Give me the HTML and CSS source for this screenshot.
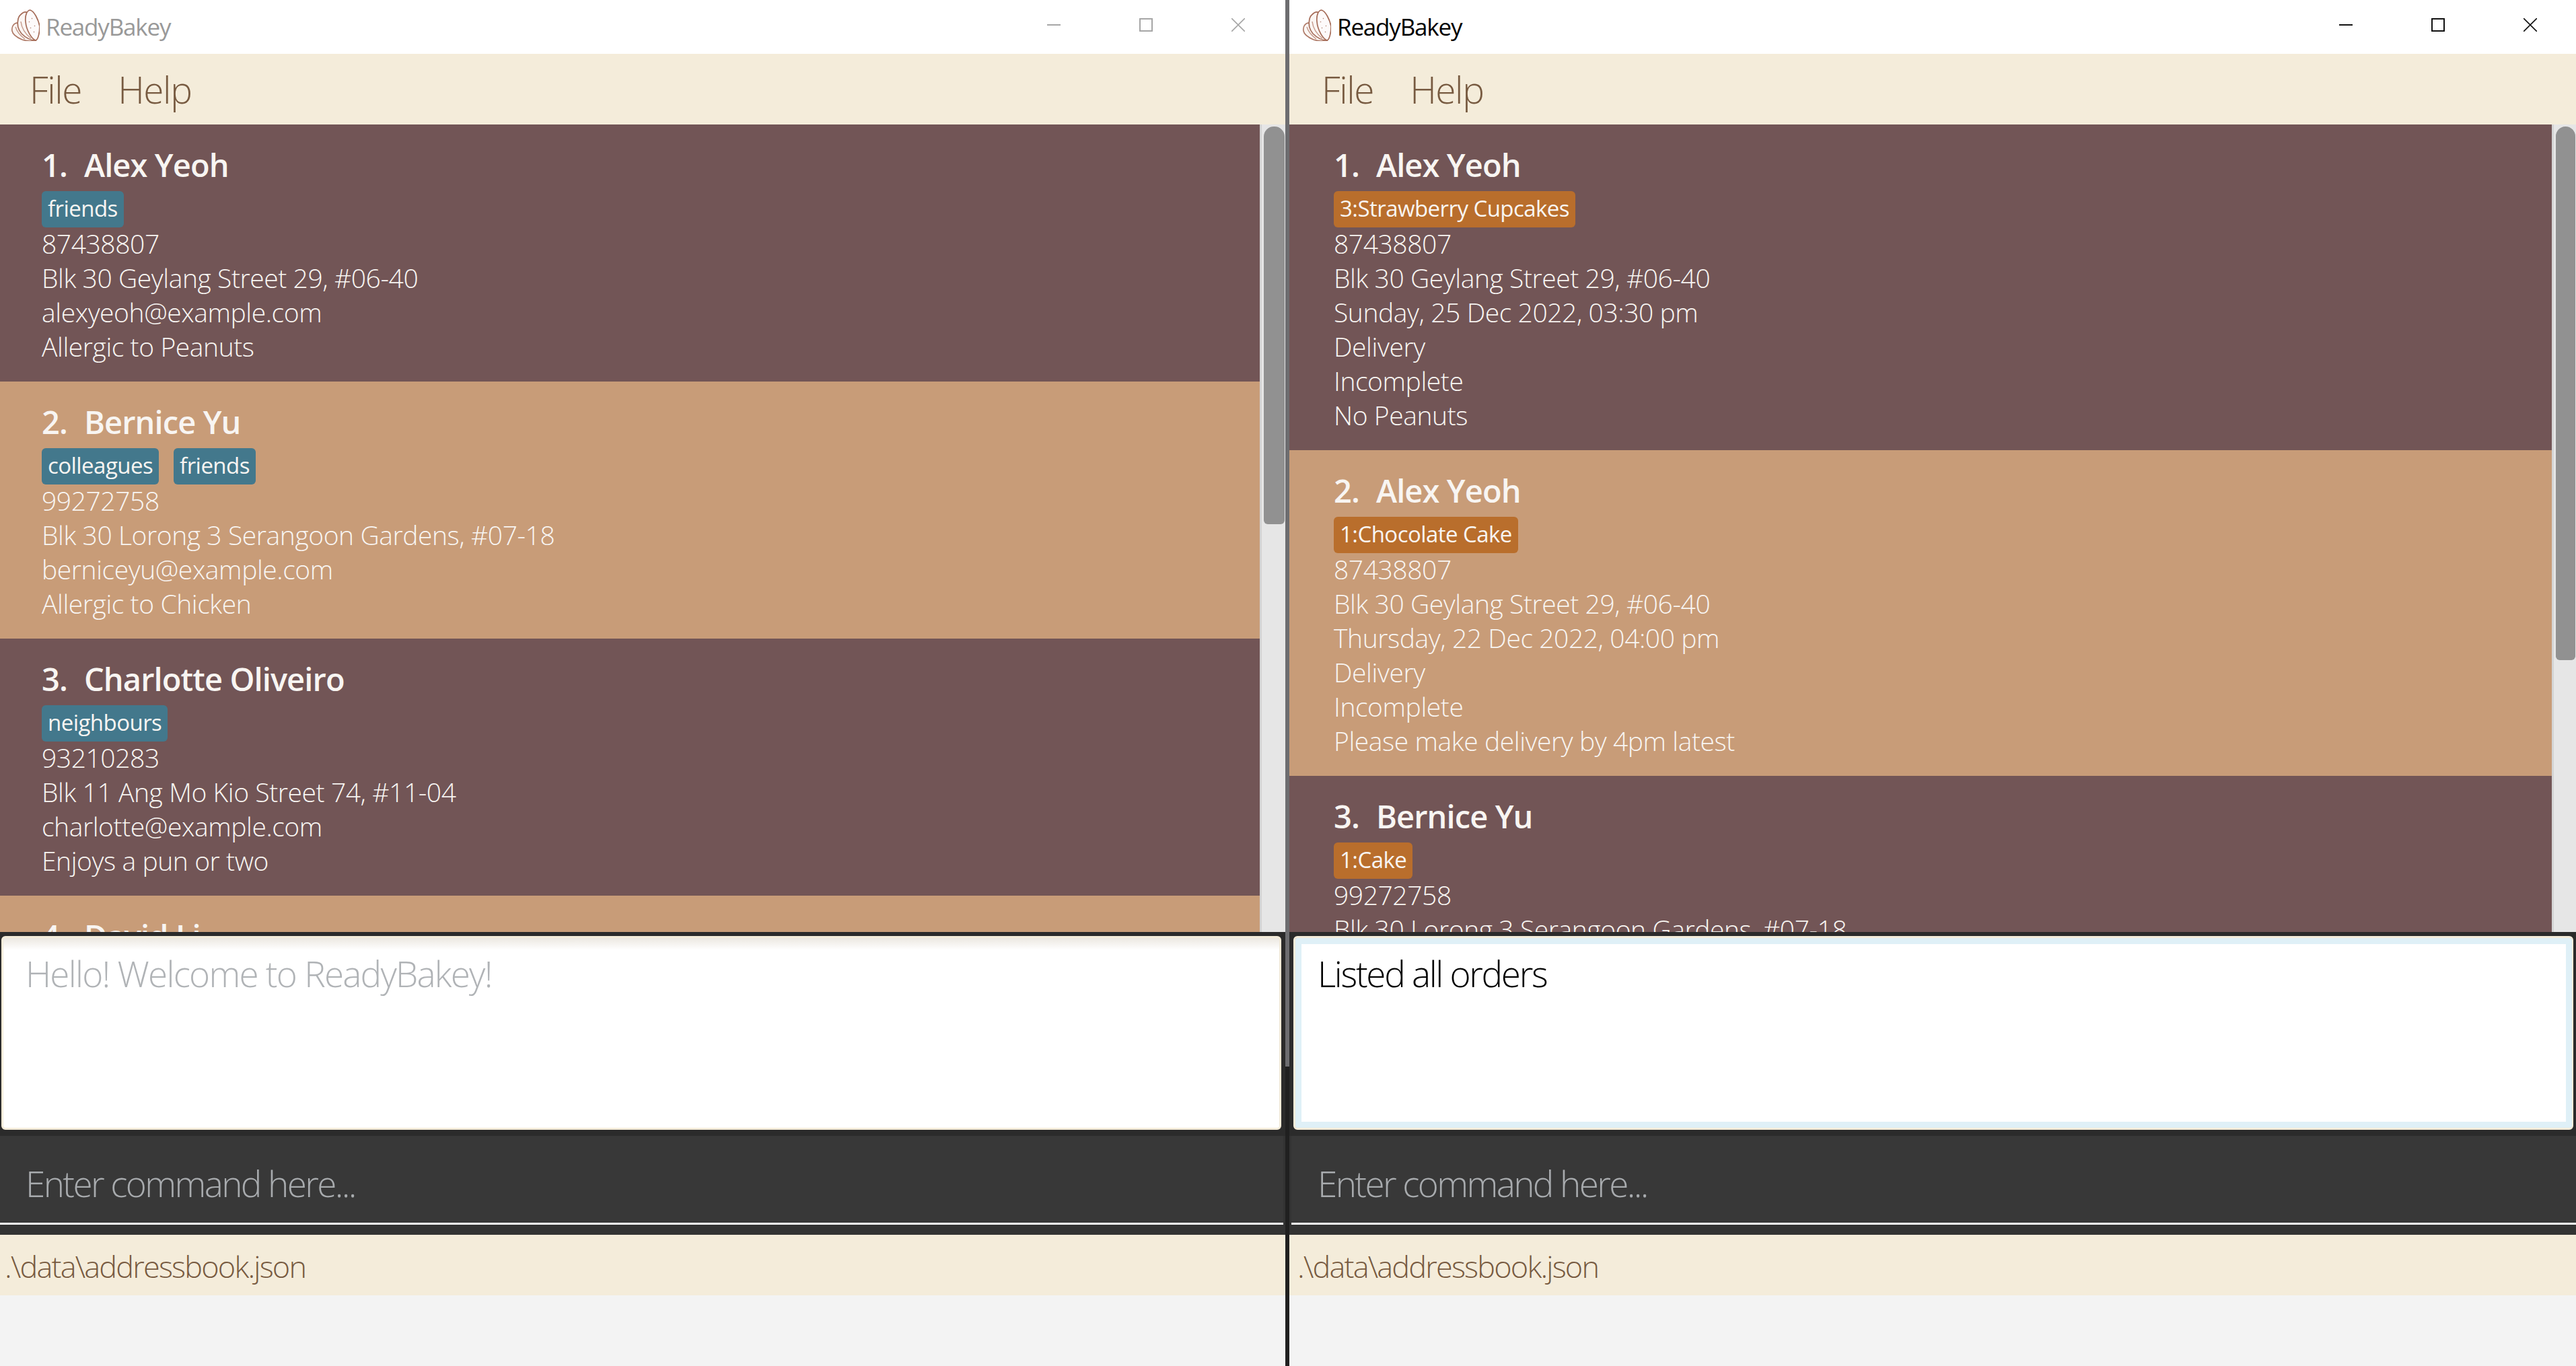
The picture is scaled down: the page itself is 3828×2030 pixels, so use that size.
FILE: index.html
```html
<!DOCTYPE html>
<html lang="en">
<head>
<meta charset="utf-8">
<title>ReadyBakey</title>
<link rel="stylesheet" href="styles.css">
</head>
<body>
<svg class="defs" width="0" height="0" aria-hidden="true">
  <symbol id="logo" viewBox="0 0 42 47">
    <path d="M8 20C3 21 0 26 1 32C2 38 9 42 16 45C22 47 31 47 36 46L22 24Z" fill="#fbf6f3" stroke="#ad7865" stroke-width="1.6"/>
    <path d="M17 5C22 2 26 5 27 12L36 46C29 46 21 42 15 36C10 30 8 22 10 14C11 10 14 7 17 5Z" fill="#fbf6f3" stroke="#a56c58" stroke-width="1.7"/>
    <path d="M28 1C34 3 40 15 42 25C42 33 40 45 36 46C30 44 22 31 21 18C20 9 23 1 28 1Z" fill="#fdfafa" stroke="#a56c58" stroke-width="1.7"/>
    <path d="M14 18C15 27 20 36 29 43M6 26C8 33 12 38 20 44" fill="none" stroke="#c59a8b" stroke-width="1.4"/>
    <path d="M30 13l1 1M34 24l1 1M28 27l1 1M33 33l1 1M26 18l1 1" stroke="#b98d7e" stroke-width="1.4"/>
  </symbol>
</svg>
<main class="desktop">
  <section class="window window-inactive">
    <header class="titlebar">
      <svg class="app-logo"><use href="#logo"/></svg>
      <span class="app-title">ReadyBakey</span>
      <div class="controls">
        <svg class="ctl" viewBox="0 0 20 20"><path d="M0 10H20" stroke-width="2"/></svg>
        <svg class="ctl" viewBox="0 0 20 20"><rect x="1" y="1" width="18" height="18" stroke-width="2"/></svg>
        <svg class="ctl" viewBox="0 0 20 20"><path d="M0 0L20 20M20 0L0 20" stroke-width="1.6"/></svg>
      </div>
    </header>
    <nav class="menubar"><span>File</span><span>Help</span></nav>
    <div class="list-pane">
      <div class="list">
        <article class="card">
          <h2 class="name"><span class="idx">1.</span>Alex Yeoh</h2>
          <div class="tags"><span class="tag">friends</span></div>
          <p>87438807</p>
          <p>Blk 30 Geylang Street 29, #06-40</p>
          <p>alexyeoh@example.com</p>
          <p>Allergic to Peanuts</p>
        </article>
        <article class="card">
          <h2 class="name"><span class="idx">2.</span>Bernice Yu</h2>
          <div class="tags"><span class="tag">colleagues</span><span class="tag">friends</span></div>
          <p>99272758</p>
          <p>Blk 30 Lorong 3 Serangoon Gardens, #07-18</p>
          <p>berniceyu@example.com</p>
          <p>Allergic to Chicken</p>
        </article>
        <article class="card">
          <h2 class="name"><span class="idx">3.</span>Charlotte Oliveiro</h2>
          <div class="tags"><span class="tag">neighbours</span></div>
          <p>93210283</p>
          <p>Blk 11 Ang Mo Kio Street 74, #11-04</p>
          <p>charlotte@example.com</p>
          <p>Enjoys a pun or two</p>
        </article>
        <article class="card">
          <h2 class="name"><span class="idx">4.</span>David Li</h2>
        </article>
      </div>
      <div class="track"><div class="thumb"></div></div>
    </div>
    <div class="result"><p class="result-text">Hello! Welcome to ReadyBakey!</p></div>
    <div class="command"><span>Enter command here...</span></div>
    <footer class="status">.\data\addressbook.json</footer>
    <div class="blank"></div>
  </section>

  <div class="divider"></div>

  <section class="window window-active">
    <header class="titlebar">
      <svg class="app-logo"><use href="#logo"/></svg>
      <span class="app-title">ReadyBakey</span>
      <div class="controls">
        <svg class="ctl" viewBox="0 0 20 20"><path d="M0 10H20" stroke-width="2"/></svg>
        <svg class="ctl" viewBox="0 0 20 20"><rect x="1" y="1" width="18" height="18" stroke-width="2"/></svg>
        <svg class="ctl" viewBox="0 0 20 20"><path d="M0 0L20 20M20 0L0 20" stroke-width="1.6"/></svg>
      </div>
    </header>
    <nav class="menubar"><span>File</span><span>Help</span></nav>
    <div class="list-pane">
      <div class="list">
        <article class="card">
          <h2 class="name"><span class="idx">1.</span>Alex Yeoh</h2>
          <div class="tags"><span class="tag tag-order">3:Strawberry Cupcakes</span></div>
          <p>87438807</p>
          <p>Blk 30 Geylang Street 29, #06-40</p>
          <p>Sunday, 25 Dec 2022, 03:30 pm</p>
          <p>Delivery</p>
          <p>Incomplete</p>
          <p>No Peanuts</p>
        </article>
        <article class="card">
          <h2 class="name"><span class="idx">2.</span>Alex Yeoh</h2>
          <div class="tags"><span class="tag tag-order">1:Chocolate Cake</span></div>
          <p>87438807</p>
          <p>Blk 30 Geylang Street 29, #06-40</p>
          <p>Thursday, 22 Dec 2022, 04:00 pm</p>
          <p>Delivery</p>
          <p>Incomplete</p>
          <p>Please make delivery by 4pm latest</p>
        </article>
        <article class="card">
          <h2 class="name"><span class="idx">3.</span>Bernice Yu</h2>
          <div class="tags"><span class="tag tag-order">1:Cake</span></div>
          <p>99272758</p>
          <p>Blk 30 Lorong 3 Serangoon Gardens, #07-18</p>
        </article>
      </div>
      <div class="track"><div class="thumb"></div></div>
    </div>
    <div class="result"><p class="result-text">Listed all orders</p></div>
    <div class="command"><span>Enter command here...</span></div>
    <footer class="status">.\data\addressbook.json</footer>
    <div class="blank"></div>
  </section>
</main>
</body>
</html>
```
FILE: styles.css
```css
* { box-sizing: border-box; }
html, body { margin: 0; padding: 0; }
body {
  width: 3828px;
  height: 2030px;
  overflow: hidden;
  font-family: "Open Sans", "Noto Sans", sans-serif;
  background: #f3f3f3;
}
.defs { display: block; height: 0; }
.desktop {
  display: grid;
  grid-template-columns: 1910px 6px 1912px;
  height: 2030px;
}
.divider { background: linear-gradient(#6d6d70 0, #6d6d70 1585px, #202020 1585px); }
.window {
  display: flex;
  flex-direction: column;
  height: 2030px;
  overflow: hidden;
  background: #f3f3f3;
}

/* title bar */
.titlebar {
  height: 80px;
  flex: none;
  display: flex;
  align-items: center;
  background: #fff;
  padding-left: 17px;
}
.window-active .titlebar { padding-left: 20px; }
.app-logo { width: 42px; height: 47px; flex: none; margin-right: 9px; margin-top: -6px; }
.app-title { font-size: 35px; letter-spacing: -1.2px; font-weight: 400; margin-top: -2px; }
.controls { margin-left: auto; display: flex; gap: 117px; align-items: center; margin-top: -6px; }
.ctl { width: 20px; height: 20px; fill: none; display: block; }
.window-inactive .app-title { color: #999; }
.window-inactive .ctl { stroke: #a6a6a6; }
.window-inactive .controls { padding-right: 60px; }
.window-active .app-title { color: #000; }
.window-active .ctl { stroke: #111; }
.window-active .controls { padding-right: 58px; }

/* menu */
.menubar {
  height: 105px;
  flex: none;
  display: flex;
  align-items: center;
  gap: 54px;
  padding-left: 44px;
  background: #f4ecda;
  color: #775a40;
  font-size: 55px;
  font-weight: 300;
  letter-spacing: -1.4px;
}
.window-active .menubar { padding-left: 48px; }

/* list */
.list-pane {
  height: 1200px;
  flex: none;
  display: flex;
  overflow: hidden;
}
.list { flex: 1; min-width: 0; overflow: hidden; }
.window-inactive .track { width: 38px; }
.window-active .track { width: 36px; }
.track {
  flex: none;
  background: linear-gradient(90deg, #d4d4d4 0, #d4d4d4 3px, #e6e6e6 3px);
  padding: 3px 1px 0 6px;
}
.thumb { background: #919191; border-radius: 15px 15px 6px 6px; }
.window-inactive .thumb { height: 591px; }
.window-active .thumb { height: 793px; }

.card {
  padding: 29px 24px 25px 62px;
  color: #f8f5f2;
  background: #725556;
}
.window-active .card { padding-left: 66px; }
.card:nth-child(even) { background: #c89c78; }
.name {
  margin: 0;
  height: 70px;
  line-height: 63px;
  font-size: 47px;
  font-weight: 600;
  letter-spacing: -.9px;
}
.idx { margin-right: 25px; font-weight: 600; }
.tags { display: flex; gap: 22px; height: 54px; }
.tag {
  height: 54px;
  line-height: 52px;
  padding: 0 9px;
  border-radius: 6px;
  background: #43788c;
  font-size: 33px;
  font-weight: 400;
  letter-spacing: -.55px;
  white-space: nowrap;
}
.tag-order { background: #b96e2c; }
.card p {
  margin: 0;
  height: 51px;
  line-height: 48px;
  font-size: 39px;
  font-weight: 350;
  letter-spacing: -.42px;
  white-space: nowrap;
}

/* result */
.result {
  height: 303px;
  flex: none;
  background: #2b2b2b;
  padding: 6px 6px 9px 2px;
}
.window-active .result { padding: 6px 4px 9px 6px; }
.result-text {
  margin: 0;
  height: 100%;
  padding: 18px 0 0 33px;
  background: linear-gradient(#ece8e1, #fff 18px);
  border: 3px solid #f4ecda;
  border-radius: 6px;
  font-size: 53px;
  line-height: 70px;
  font-weight: 300;
  letter-spacing: -1.75px;
  color: #b0b3b6;
}
.window-active .result-text {
  padding: 18px 0 0 33px;
  border-width: 3px 2px 3px 3px;
  color: #000;
  letter-spacing: -2.3px;
  background: linear-gradient(#ece8e1, #fff 9px) padding-box;
  box-shadow: inset 0 0 0 9px #dff0f7;
  background-color: #fff;
}

/* command */
.command {
  height: 147px;
  flex: none;
  background: #333;
  padding-right: 3px;
}
.window-active .command { padding: 0 0 0 3px; }
.command span {
  display: block;
  height: 132px;
  padding: 7px 0 0 38px;
  background: #383838;
  border-bottom: 3px solid #fff;
  color: #a8abae;
  font-size: 53px;
  line-height: 128px;
  font-weight: 300;
  letter-spacing: -2.6px;
}
.window-active .command span { padding-left: 39px; }

/* status */
.status {
  height: 90px;
  flex: none;
  padding: 3px 0 0 7px;
  background: #f4ecda;
  color: #775a40;
  font-size: 45px;
  line-height: 88px;
  font-weight: 300;
  letter-spacing: -1.8px;
}
.window-active .status { padding-left: 12px; }
.blank { flex: 1; background: #f3f3f3; }
```
